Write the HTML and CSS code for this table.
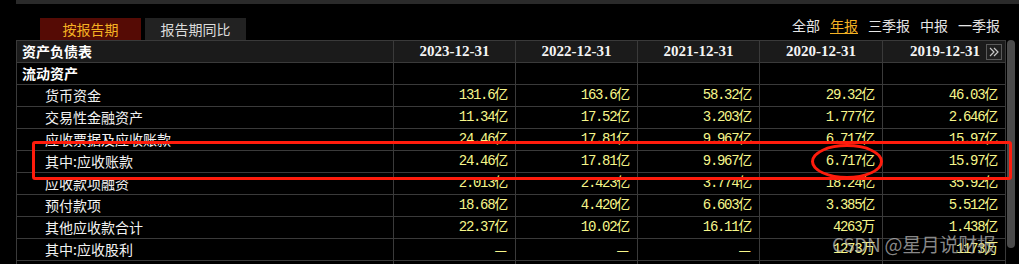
FILE: index.html
```html
<!DOCTYPE html>
<html lang="zh-CN">
<head>
<meta charset="utf-8">
<link rel="stylesheet" href="styles.css">
</head>
<body>
<div class="page">
  <div class="topstrip"></div>
  <div class="toolbar">
    <div class="tabs">
      <span class="tab active">按报告期</span>
      <span class="tab">报告期同比</span>
    </div>
    <div class="filters">
      <span>全部</span><span class="on">年报</span><span>三季报</span><span>中报</span><span>一季报</span>
    </div>
  </div>
  <div class="tablewrap">
    <div class="grid">
      <div class="c head lbl bold">资产负债表</div>
      <div class="c head date">2023-12-31</div>
      <div class="c head date">2022-12-31</div>
      <div class="c head date">2021-12-31</div>
      <div class="c head date">2020-12-31</div>
      <div class="c head date last">2019-12-31<span class="more"><svg width="14" height="14" viewBox="0 0 14 14"><path d="M3 3 L7 7 L3 11 M7 3 L11 7 L7 11" fill="none" stroke="#c8c8c8" stroke-width="1.2"/></svg></span></div>

      <div class="c lbl bold">流动资产</div>
      <div class="c"></div><div class="c"></div><div class="c"></div><div class="c"></div><div class="c"></div>

      <div class="c lbl">货币资金</div>
      <div class="c v">131.6亿</div><div class="c v">163.6亿</div><div class="c v">58.32亿</div><div class="c v">29.32亿</div><div class="c v">46.03亿</div>

      <div class="c lbl">交易性金融资产</div>
      <div class="c v">11.34亿</div><div class="c v">17.52亿</div><div class="c v">3.203亿</div><div class="c v">1.777亿</div><div class="c v">2.646亿</div>

      <div class="c lbl">应收票据及应收账款</div>
      <div class="c v">24.46亿</div><div class="c v">17.81亿</div><div class="c v">9.967亿</div><div class="c v">6.717亿</div><div class="c v">15.97亿</div>

      <div class="c lbl">其中:应收账款</div>
      <div class="c v">24.46亿</div><div class="c v">17.81亿</div><div class="c v">9.967亿</div><div class="c v">6.717亿</div><div class="c v">15.97亿</div>

      <div class="c lbl">应收款项融资</div>
      <div class="c v">2.013亿</div><div class="c v">2.423亿</div><div class="c v">3.774亿</div><div class="c v">18.24亿</div><div class="c v">35.92亿</div>

      <div class="c lbl">预付款项</div>
      <div class="c v">18.68亿</div><div class="c v">4.420亿</div><div class="c v">6.603亿</div><div class="c v">3.385亿</div><div class="c v">5.512亿</div>

      <div class="c lbl">其他应收款合计</div>
      <div class="c v">22.37亿</div><div class="c v">10.02亿</div><div class="c v">16.11亿</div><div class="c v">4263万</div><div class="c v">1.438亿</div>

      <div class="c lbl">其中:应收股利</div>
      <div class="c v"><span class="dash">—</span></div><div class="c v"><span class="dash">—</span></div><div class="c v"><span class="dash">—</span></div><div class="c v">1273万</div><div class="c v">1173万</div>

      <div class="c lbl"></div>
      <div class="c"></div><div class="c"></div><div class="c"></div><div class="c"></div><div class="c"></div>
    </div>
    <div class="scroll"><div class="thumb"></div></div>
  </div>
  <div class="mark-rect"></div>
  <div class="mark-ellipse"></div>
  <div class="watermark">CSDN @星月说财报</div>
</div>
</body>
</html>
```

FILE: styles.css
```css
html, body {
  margin: 0;
  padding: 0;
  background: #000;
  width: 1019px;
  height: 264px;
  overflow: hidden;
}
.page {
  position: relative;
  width: 1019px;
  height: 264px;
  overflow: hidden;
  font-family: "Noto Sans CJK SC", sans-serif;
  color: #f0f0f0;
}
.topstrip {
  margin-left: 16px;
  height: 4px;
  background: #2a2a2a;
}
.toolbar {
  height: 36px;
  display: flex;
  justify-content: space-between;
}
.tabs {
  display: flex;
  align-items: flex-end;
  gap: 4px;
  margin-left: 40px;
}
.tab {
  width: 101px;
  height: 22px;
  line-height: 22px;
  text-align: center;
  font-size: 14px;
  background: #222;
  color: #dcdcdc;
}
.tab.active {
  background: #550b05;
  color: #f5b223;
}
.filters {
  display: flex;
  gap: 10px;
  margin-top: 11px;
  margin-right: 19px;
  font-size: 14px;
  line-height: 20px;
  height: 20px;
  color: #e6e6e6;
}
.filters .on {
  color: #f5b223;
  text-decoration: underline;
  text-underline-offset: 2px;
}
.tablewrap {
  display: flex;
  margin-left: 16px;
}
.grid {
  display: grid;
  grid-template-columns: 377px 122px 122px 122px 123px 123px;
  border-left: 1px solid #3a3a3a;
  border-top: 1px solid #3a3a3a;
}
.c {
  box-sizing: border-box;
  height: 22px;
  border-right: 1px solid #3a3a3a;
  border-bottom: 1px solid #3a3a3a;
  line-height: 21px;
  font-size: 14px;
  white-space: nowrap;
  overflow: hidden;
}
.c.head {
  background: #1b1b1b;
}
.lbl {
  padding-left: 28px;
  color: #f2f2f2;
}
.lbl.bold {
  padding-left: 5px;
  font-weight: bold;
  color: #fff;
}
.date {
  text-align: center;
  font-family: "Liberation Serif", serif;
  font-weight: bold;
  font-size: 15px;
  color: #f4f4f4;
}
.date.last {
  display: flex;
  justify-content: flex-end;
  align-items: center;
  gap: 6px;
  padding-right: 3px;
}
.more {
  box-sizing: border-box;
  display: flex;
  width: 16px;
  height: 16px;
  border: 1px solid #5a5a5a;
  background: #1f1f1f;
}
.v {
  text-align: right;
  padding-right: 8px;
  font-family: "Liberation Mono", "Noto Sans CJK SC", monospace;
  letter-spacing: -1.3px;
  color: #f6f68a;
}
.dash {
  font-family: "Noto Sans CJK SC", sans-serif;
  letter-spacing: 0;
}
.scroll {
  width: 8px;
  margin-left: 1px;
}
.thumb {
  width: 8px;
  height: 208px;
  background: #4b4b4b;
  border-radius: 4px;
}
.mark-rect {
  position: absolute;
  left: 32px;
  top: 141px;
  width: 974px;
  height: 33px;
  border: 3px solid #ff1c0c;
  border-radius: 3px;
}
.mark-ellipse {
  position: absolute;
  left: 811px;
  top: 144px;
  width: 66px;
  height: 29px;
  border: 3px solid #ff1c0c;
  border-radius: 50%;
}
.watermark {
  position: absolute;
  left: 832px;
  top: 231px;
  font-size: 19px;
  line-height: 26px;
  letter-spacing: -0.3px;
  color: rgba(190, 190, 190, 0.72);
  white-space: nowrap;
}
```
